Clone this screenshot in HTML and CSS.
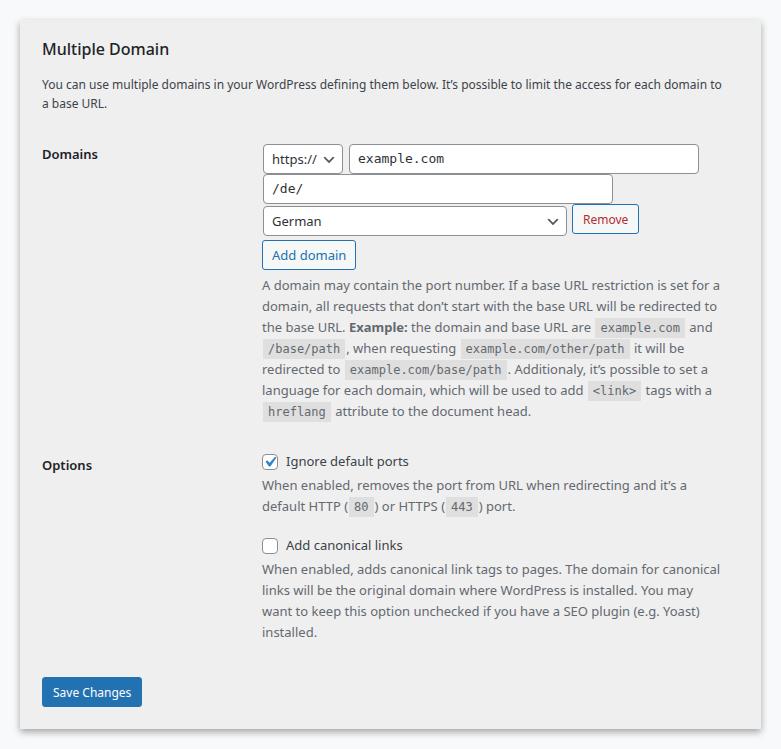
FILE: index.html
```html
<!DOCTYPE html>
<html lang="en">
<head>
    <meta charset="UTF-8">
    <meta name="viewport" content="width=device-width, initial-scale=1.0">
    <title>Multiple Domain</title>
    <link rel="stylesheet" href="styles.css">
</head>
<body>
    <form class="settings">
        <h2>Multiple Domain</h2>
        <p class="intro">You can use multiple domains in your WordPress defining them below. It’s possible to limit the access for each domain to a base URL.</p>

        <div class="form-row">
            <h3 class="row-title">Domains</h3>
            <div class="row-content">
                <div class="domain">
                    <div class="domain-line">
                        <select class="protocol" aria-label="Protocol">
                            <option>http://</option>
                            <option selected>https://</option>
                        </select>
                        <input type="text" class="code-input" value="example.com" aria-label="Domain">
                    </div>
                    <div class="domain-line">
                        <input type="text" class="code-input" value="/de/" aria-label="Base URL">
                    </div>
                    <div class="domain-line language-line">
                        <select class="language" aria-label="Language">
                            <option>English</option>
                            <option selected>German</option>
                        </select>
                        <button type="button" class="btn remove">Remove</button>
                    </div>
                </div>
                <button type="button" class="btn add">Add domain</button>
                <p class="description">A domain may contain the port number. If a base URL restriction is set for a domain, all requests that don’t start with the base URL will be redirected to the base URL. <strong>Example:</strong> the domain and base URL are <code>example.com</code> and <code>/base/path</code>, when requesting <code>example.com/other/path</code> it will be redirected to <code>example.com/base/path</code>. Additionaly, it’s possible to set a language for each domain, which will be used to add <code>&lt;link&gt;</code> tags with a <code>hreflang</code> attribute to the document head.</p>
            </div>
        </div>

        <div class="form-row">
            <h3 class="row-title">Options</h3>
            <div class="row-content options">
                <div class="option">
                    <label class="check-label" for="ignore-ports">
                        <input type="checkbox" id="ignore-ports" checked>
                        Ignore default ports
                    </label>
                    <p class="description">When enabled, removes the port from URL when redirecting and it’s a default HTTP (<code>80</code>) or HTTPS (<code>443</code>) port.</p>
                </div>
                <div class="option">
                    <label class="check-label" for="canonical-links">
                        <input type="checkbox" id="canonical-links">
                        Add canonical links
                    </label>
                    <p class="description">When enabled, adds canonical link tags to pages. The domain for canonical links will be the original domain where WordPress is installed. You may want to keep this option unchecked if you have a SEO plugin (e.g. Yoast) installed.</p>
                </div>
            </div>
        </div>

        <button type="submit" class="btn primary">Save Changes</button>
    </form>
</body>
</html>
```

FILE: styles.css
```css
* {
    margin: 0;
    padding: 0;
    box-sizing: border-box;
}

body {
    font-family: "Segoe UI", "Noto Sans", sans-serif;
    font-size: 12px;
    background: #f7f9fb;
    color: #3c434a;
    padding: 20px;
}

.settings {
    background: #efefef;
    padding: 18px 22px 22px;
    box-shadow: 0 3px 7px rgba(0, 0, 0, 0.35);
}

h2 {
    color: #1d2327;
    font-size: 16px;
    font-weight: 500;
    line-height: 22px;
    margin-bottom: 15px;
}

.intro {
    line-height: 19px;
    padding-right: 10px;
    margin-bottom: 31px;
}

.form-row {
    display: grid;
    grid-template-columns: 200px 1fr;
    gap: 20px;
}

.form-row + .form-row {
    margin-top: 33px;
}

.row-title {
    color: #1d2327;
    font-size: 13px;
    font-weight: 600;
    line-height: 20px;
}

.row-content {
    padding-right: 14px;
}

.domain {
    padding-left: 1px;
}

.domain-line {
    display: flex;
    gap: 6px;
}

.language-line {
    gap: 5px;
    margin-bottom: 4px;
}

select,
.code-input {
    height: 30px;
    border: 1px solid #8c8f94;
    border-radius: 4px;
    background: #fff;
    color: #2c3338;
    padding: 0 8px;
}

select {
    appearance: none;
    font: 13px "Segoe UI", "Noto Sans", sans-serif;
    padding-right: 24px;
    background: #fff url('data:image/svg+xml,<svg xmlns="http://www.w3.org/2000/svg" width="20" height="20"><path d="M5 6l5 5 5-5 2 1-7 7-7-7 2-1z" fill="%23555"/></svg>') no-repeat right 5px top 55%;
    background-size: 16px 16px;
}

.protocol {
    width: 80px;
}

.language {
    width: 304px;
    margin-top: 2px;
}

.code-input {
    width: 350px;
    padding-bottom: 2px;
    font: 13px Consolas, "DejaVu Sans Mono", monospace;
}

.btn {
    height: 30px;
    padding: 0 10px;
    border: 1px solid #2271b1;
    border-radius: 3px;
    background: #f6f7f7;
    color: #2271b1;
    font-family: inherit;
    font-size: 12px;
    white-space: nowrap;
}

.remove {
    color: #b32d2e;
}

.add {
    display: block;
    padding: 0 9px;
    font-size: 13px;
}

.primary {
    display: block;
    margin-top: 34px;
    background: #2271b1;
    color: #fff;
}

.description {
    color: #646970;
    font-size: 13px;
    line-height: 21px;
}

.add + .description {
    margin-top: 5px;
}

code {
    font: 12px Consolas, "DejaVu Sans Mono", monospace;
    background: #dfdfdf;
    padding: 3px 5px;
    margin: 0 1px;
}

.options {
    display: grid;
    gap: 18px;
    margin-top: -4px;
}

.check-label {
    display: flex;
    align-items: center;
    gap: 8px;
    font-size: 13px;
    line-height: 21px;
    margin-bottom: 3px;
}

input[type="checkbox"] {
    appearance: none;
    width: 16px;
    height: 16px;
    border: 1px solid #8c8f94;
    border-radius: 4px;
    background: #fff;
}

input[type="checkbox"]:checked {
    background: #fff url('data:image/svg+xml,<svg xmlns="http://www.w3.org/2000/svg" viewBox="0 0 20 20"><path d="M14.83 4.89l1.34.94-5.81 8.38H9.02L5.78 9.67l1.34-1.25 2.57 2.4z" fill="%233582c4"/></svg>') no-repeat center;
    background-size: 21px 21px;
}

@media (max-width: 680px) {
    .form-row {
        grid-template-columns: 1fr;
        gap: 10px;
    }

    .code-input,
    .language {
        min-width: 0;
    }
}
```
